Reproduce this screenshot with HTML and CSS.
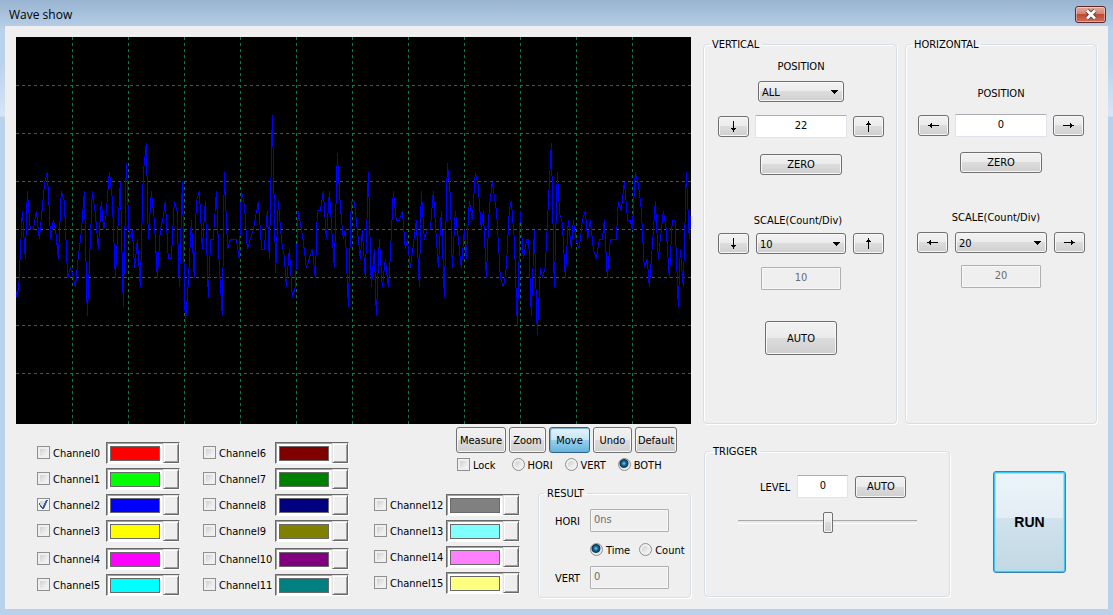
FILE: index.html
```html
<!DOCTYPE html>
<html lang="en">
<head>
<meta charset="utf-8">
<title>Wave show</title>
<link rel="stylesheet" href="styles.css">
</head>
<body>
<div class="window">
  <header class="titlebar">
    <h1 class="title">Wave show</h1>
    <button class="close" aria-label="Close">
      <svg width="14" height="11" viewBox="0 0 14 11"><path d="M3 1.5 11 9.5M11 1.5 3 9.5" stroke="#5a3a3a" stroke-width="4.6"/><path d="M3 1.5 11 9.5M11 1.5 3 9.5" stroke="#fff" stroke-width="2.8"/></svg>
    </button>
  </header>
  <main class="client">
    <section class="top">
      <div class="scope">
        <svg class="wave" viewBox="0 0 675 387" preserveAspectRatio="none" role="img" aria-label="Waveform">
          <path class="grid-line" d="M56.5 0V387M112.5 0V387M168.5 0V387M224.5 0V387M280.5 0V387M336.5 0V387M392.5 0V387M448.5 0V387M504.5 0V387M560.5 0V387M616.5 0V387"/>
          <path class="grid-line" d="M0 48.5H675M0 96.5H675M0 144.5H675M0 192.5H675M0 240.5H675M0 288.5H675M0 336.5H675"/>
          <g class="trace" transform="translate(0 192.8) scale(.33333 9.6)">
            <polyline transform="translate(-18 0)" points="18,6.3 19,7 26,6.1 37,-2 46,3 52,-4 61,0 70,0 79,-2 88,1 104,-5 112,-6 122,1 130,-1 137,0 145,3 154,-4 163,-3 173,5 181,4 187,4.5 196,6 205,2.8 214,.2 223,-4 232,9 247,-4 256,-1.7 265,2 274,-3 281,0 289,-1.8 298,-6 307,-3.2 316,5 331,-5 340,8 349,-7 358,1 367,0 374,4 382,1 391,6 400,-6 409,-9 415,1 424,-4 433,-1 442,5 451,0 459,-1.2 466,-3 475,3 484,3 493,-3 501,-2 508,6 517,-5 526,10 535,5.5 544,-1 553,5 559,-3 568,-4 577,2 586,-3 595,7 602,1 610,1 619,-4 628,4 637,9 643,-6 653,2 661,1 679,1 688,3 694,-4"/>
            <polyline transform="translate(642 0)" points="34,-4 43,-2.7 52,2 70,0 85,-3 95,2 103,2 112,-2 118,3 127,-12 137,4.5 145,-3 155,1.3 163,2.8 169,6 178,2 187,7 196,6 205,-2 220,1.2 229,4 247,2 256,5 262,-2 271,-2 280,-4 289,1 298,-4 313,4 322,-8 331,-2.5 340,1 346,0 355,8 364,-3 373,-3 391,3 397,0 406,5 415,-6 424,6 433,2 439,9 448,1 457,6 466,3 475,6 481,2.7 490,-4 499,-1 508,-1 517,-2 526,2 532,1 541,4 550,1.6 559,-1 568,6 574,-4 583,1 592,0 601,0 610,-4 625,4 634,-2 643,7 652,-7 661,-3.6 667,4 676,-2 694,4 703,0 709,3 718,-3"/>
            <polyline transform="translate(1332 0)" points="28,-3 37,-1 46,-6 54,-4.8 64,0 70,-2 79,5 88,-2.4 97,-5 110,-1.8 121,5 130,6 139,4 148,-2.1 154,-3 163,1 172,10 181,-2 190,3 200,1 206,1 214,9 223,0 232,11 241,4 248,5 256,3.8 265,-2.8 274,-9 283,6 292,-6 299,-1.7 307,-.7 316,5 325,-1 334,2 340,-1 349,1.2 358,2 367,-1 376,-2 383,1 391,-1 400,2 409,3 418,1 427,1 433,-1 442,5 451,1 469,1 475,-3 484,-2 493,-5 503,-1 511,-1 517,0 526,-6 535,-4.8 544,-2.1 553,4 562,3 568,6 577,1.7 586,-3 595,3 610,-2 619,0 628,5 637,-1 645,-1 655,8 661,2 670,6 679,-6 688,1 692,-1.4"/>
          </g>
        </svg>
      </div>
      <fieldset class="group vertical">
        <legend>VERTICAL</legend>
        <div class="stack v-stack">
          <label class="caption" for="v-chan">POSITION</label>
          <select id="v-chan" class="select narrow"><option>ALL</option></select>
          <div class="row v-pos">
            <button class="btn arrow" aria-label="Position down"><svg width="5" height="11" viewBox="0 0 5 11"><path d="M2 0h1v7h2v1h-1v1h-1v2h-1v-2h-1v-1h-1v-1h2z"/></svg></button>
            <input class="field wide" value="22" aria-label="Vertical position">
            <button class="btn arrow" aria-label="Position up"><svg width="5" height="11" viewBox="0 0 5 11"><path d="M2 11h1v-7h2v-1h-1v-1h-1v-2h-1v2h-1v1h-1v1h2z"/></svg></button>
          </div>
          <button class="btn zero v-zero">ZERO</button>
          <label class="caption v-scale" for="v-scale">SCALE(Count/Div)</label>
          <div class="row v-scale-row">
            <button class="btn arrow" aria-label="Scale down"><svg width="5" height="11" viewBox="0 0 5 11"><path d="M2 0h1v7h2v1h-1v1h-1v2h-1v-2h-1v-1h-1v-1h2z"/></svg></button>
            <select id="v-scale" class="select"><option>10</option></select>
            <button class="btn arrow" aria-label="Scale up"><svg width="5" height="11" viewBox="0 0 5 11"><path d="M2 11h1v-7h2v-1h-1v-1h-1v-2h-1v2h-1v1h-1v1h2z"/></svg></button>
          </div>
          <input class="field readout" value="10" disabled aria-label="Vertical scale value">
          <button class="btn auto">AUTO</button>
        </div>
      </fieldset>
      <fieldset class="group horizontal">
        <legend>HORIZONTAL</legend>
        <div class="stack">
          <label class="caption h-caption" for="h-pos">POSITION</label>
          <div class="row h-pos">
            <button class="btn arrow" aria-label="Position left"><svg width="11" height="5" viewBox="0 0 11 5"><path d="M11 2v1h-7v2h-1v-1h-1v-1h-2v-1h2v-1h1v-1h1v2z"/></svg></button>
            <input id="h-pos" class="field wide" value="0">
            <button class="btn arrow" aria-label="Position right"><svg width="11" height="5" viewBox="0 0 11 5"><path d="M0 2v1h7v2h1v-1h1v-1h2v-1h-2v-1h-1v-1h-1v2z"/></svg></button>
          </div>
          <button class="btn zero h-zero">ZERO</button>
          <label class="caption h-scale" for="h-scale">SCALE(Count/Div)</label>
          <div class="row h-scale-row">
            <button class="btn arrow" aria-label="Scale left"><svg width="11" height="5" viewBox="0 0 11 5"><path d="M11 2v1h-7v2h-1v-1h-1v-1h-2v-1h2v-1h1v-1h1v2z"/></svg></button>
            <select id="h-scale" class="select h-select"><option>20</option></select>
            <button class="btn arrow" aria-label="Scale right"><svg width="11" height="5" viewBox="0 0 11 5"><path d="M0 2v1h7v2h1v-1h1v-1h2v-1h-2v-1h-1v-1h-1v2z"/></svg></button>
          </div>
          <input class="field readout" value="20" disabled aria-label="Horizontal scale value">
        </div>
      </fieldset>
    </section>

    <section class="bottom">
      <div class="channels">
        <div class="channel-col first">
          <div class="channel"><label><input type="checkbox" class="check">Channel0</label><button class="swatch" aria-label="Channel0 colour"><span class="chip red"></span><span class="drop"></span></button></div>
          <div class="channel"><label><input type="checkbox" class="check">Channel1</label><button class="swatch" aria-label="Channel1 colour"><span class="chip lime"></span><span class="drop"></span></button></div>
          <div class="channel"><label><input type="checkbox" class="check" checked>Channel2</label><button class="swatch" aria-label="Channel2 colour"><span class="chip blue"></span><span class="drop"></span></button></div>
          <div class="channel"><label><input type="checkbox" class="check">Channel3</label><button class="swatch" aria-label="Channel3 colour"><span class="chip yellow"></span><span class="drop"></span></button></div>
          <div class="channel spaced"><label><input type="checkbox" class="check">Channel4</label><button class="swatch" aria-label="Channel4 colour"><span class="chip magenta"></span><span class="drop"></span></button></div>
          <div class="channel"><label><input type="checkbox" class="check">Channel5</label><button class="swatch" aria-label="Channel5 colour"><span class="chip cyan"></span><span class="drop"></span></button></div>
        </div>
        <div class="channel-col">
          <div class="channel"><label><input type="checkbox" class="check">Channel6</label><button class="swatch" aria-label="Channel6 colour"><span class="chip maroon"></span><span class="drop"></span></button></div>
          <div class="channel"><label><input type="checkbox" class="check">Channel7</label><button class="swatch" aria-label="Channel7 colour"><span class="chip green"></span><span class="drop"></span></button></div>
          <div class="channel"><label><input type="checkbox" class="check">Channel8</label><button class="swatch" aria-label="Channel8 colour"><span class="chip navy"></span><span class="drop"></span></button></div>
          <div class="channel"><label><input type="checkbox" class="check">Channel9</label><button class="swatch" aria-label="Channel9 colour"><span class="chip olive"></span><span class="drop"></span></button></div>
          <div class="channel spaced"><label><input type="checkbox" class="check">Channel10</label><button class="swatch" aria-label="Channel10 colour"><span class="chip purple"></span><span class="drop"></span></button></div>
          <div class="channel"><label><input type="checkbox" class="check">Channel11</label><button class="swatch" aria-label="Channel11 colour"><span class="chip teal"></span><span class="drop"></span></button></div>
        </div>
      </div>

      <div class="tools">
        <div class="toolbar">
          <button class="btn tool">Measure</button>
          <button class="btn tool">Zoom</button>
          <button class="btn tool active">Move</button>
          <button class="btn tool">Undo</button>
          <button class="btn tool">Default</button>
        </div>
        <div class="modes">
          <label class="lock"><input type="checkbox" class="check">Lock</label>
          <label><input type="radio" name="axis" class="radio">HORI</label>
          <label><input type="radio" name="axis" class="radio">VERT</label>
          <label><input type="radio" name="axis" class="radio" checked>BOTH</label>
        </div>
        <div class="lower">
          <div class="channel-col last">
            <div class="channel"><label><input type="checkbox" class="check">Channel12</label><button class="swatch" aria-label="Channel12 colour"><span class="chip gray"></span><span class="drop"></span></button></div>
            <div class="channel"><label><input type="checkbox" class="check">Channel13</label><button class="swatch" aria-label="Channel13 colour"><span class="chip aqua"></span><span class="drop"></span></button></div>
            <div class="channel"><label><input type="checkbox" class="check">Channel14</label><button class="swatch" aria-label="Channel14 colour"><span class="chip pink"></span><span class="drop"></span></button></div>
            <div class="channel"><label><input type="checkbox" class="check">Channel15</label><button class="swatch" aria-label="Channel15 colour"><span class="chip cream"></span><span class="drop"></span></button></div>
          </div>
          <fieldset class="group result">
            <legend>RESULT</legend>
            <div class="result-grid">
              <label for="r-hori">HORI</label>
              <input id="r-hori" class="field left" value="0ns" disabled>
              <div class="units">
                <label><input type="radio" name="unit" class="radio" checked>Time</label>
                <label><input type="radio" name="unit" class="radio">Count</label>
              </div>
              <label for="r-vert">VERT</label>
              <input id="r-vert" class="field left" value="0" disabled>
            </div>
          </fieldset>
        </div>
      </div>

      <div class="side">
        <fieldset class="group trigger">
          <legend>TRIGGER</legend>
          <div class="level-row">
            <label for="level">LEVEL</label>
            <input id="level" class="field level" value="0">
            <button class="btn level-auto">AUTO</button>
          </div>
          <input type="range" class="slider" min="0" max="100" value="50" aria-label="Trigger level">
        </fieldset>
        <button class="run">RUN</button>
      </div>
    </section>
  </main>
</div>
</body>
</html>
```
FILE: styles.css
```css
* {
  box-sizing: border-box;
}

body {
  margin: 0;
  font: 11px/14px "DejaVu Sans Condensed", "Noto Sans", sans-serif;
  color: #000;
}

button,
input,
select {
  margin: 0;
  font: inherit;
  color: inherit;
}

.window {
  display: flex;
  flex-direction: column;
  min-height: 100vh;
  padding: 0 5px 6px;
  background: linear-gradient(#99b4d1 0, #b9d1ea 30px, #b9d1ea 60px, #d7e5f5 116px, #b9d1ea 117px);
}

.titlebar {
  display: flex;
  justify-content: space-between;
  align-items: center;
  height: 26px;
  padding: 3px 2px 0 4px;
}

.title {
  margin: 0;
  font: 12px/18px "Open Sans", "Noto Sans", sans-serif;
}

.close {
  display: flex;
  align-items: center;
  justify-content: center;
  width: 31px;
  height: 17px;
  padding: 0;
  border: 1px solid #5c2a2a;
  border-radius: 3px;
  background: linear-gradient(#e2a99b 0, #d0826f 48%, #bd4a30 50%, #cf7059 100%);
  box-shadow: inset 0 0 0 1px rgba(255, 255, 255, .4);
}

.close svg {
  fill: none;
}

.client {
  flex: 1;
  display: flex;
  flex-direction: column;
  padding: 11px;
  background: #efefef;
}

.top {
  flex: 1;
  display: grid;
  grid-template-columns: 1fr 194px 192px;
  column-gap: 8px;
  min-height: 387px;
}

.scope {
  display: flex;
  margin-right: 4px;
  background: #000;
}

.wave {
  display: block;
  flex: 1;
  width: 100%;
  height: 100%;
}

.grid-line {
  fill: none;
  stroke: #008040;
  stroke-dasharray: 3 3;
  shape-rendering: crispEdges;
}

.trace polyline {
  fill: none;
  stroke: #00f;
  vector-effect: non-scaling-stroke;
  shape-rendering: crispEdges;
}

.group {
  min-width: 0;
  margin: 0;
  padding: 0;
  border: 1px solid #d5dfe8;
  border-radius: 4px;
  box-shadow: 1px 1px 0 #fff, inset 1px 1px 0 #fff;
}

.group legend {
  height: 14px;
  margin-left: 5px;
  padding: 0 3px;
  line-height: 16px;
}

.stack {
  display: flex;
  flex-direction: column;
  align-items: center;
}

.v-stack {
  padding-left: 2px;
}

.row {
  display: flex;
  align-items: center;
  gap: 7px;
}

label {
  display: flex;
  align-items: center;
  padding-top: 2px;
}

.caption {
  align-items: flex-start;
  height: 14px;
  margin-top: 8px;
  padding-top: 0;
  line-height: 16px;
}

.btn {
  display: flex;
  align-items: center;
  justify-content: center;
  height: 21px;
  padding: 1px 0 0;
  border: 1px solid #707070;
  border-radius: 3px;
  background: linear-gradient(#f2f2f2 0, #ebebeb 49%, #dcdcdc 50%, #cfcfcf 100%);
  box-shadow: inset 0 0 0 1px #f7f7f7;
}

.arrow {
  width: 31px;
  padding: 0;
}

.select {
  appearance: none;
  width: 90px;
  height: 21px;
  padding: 2px 3px 0;
  border: 1px solid #707070;
  border-radius: 3px;
  background:
    linear-gradient(#000, #000) right 5px top 8px / 7px 1px no-repeat,
    linear-gradient(#000, #000) right 6px top 9px / 5px 1px no-repeat,
    linear-gradient(#000, #000) right 7px top 10px / 3px 1px no-repeat,
    linear-gradient(#000, #000) right 8px top 11px / 1px 1px no-repeat,
    linear-gradient(#f2f2f2 0, #ebebeb 49%, #dcdcdc 50%, #cfcfcf 100%);
  box-shadow: inset 0 0 0 1px #f7f7f7;
}

.narrow {
  width: 86px;
  margin-top: 8px;
}

.h-select {
  width: 92px;
}

.field {
  height: 23px;
  padding: 0 3px 2px;
  border: 1px solid #e2e3ea;
  border-top-color: #abadb3;
  border-radius: 1px;
  background: #fff;
  text-align: center;
}

.field:disabled {
  border-color: #afafaf;
  background: #efefef;
  box-shadow: inset 0 0 0 1px #f7f7f7;
  color: #6d6d6d;
}

.wide {
  width: 92px;
}

.zero {
  width: 82px;
}

.readout {
  width: 80px;
  margin-top: 12px;
}

.v-pos {
  gap: 6px;
  margin-top: 13px;
}

.v-zero {
  margin-top: 16px;
}

.v-scale {
  margin-top: 38px;
  padding-right: 6px;
}

.v-scale-row {
  margin-top: 6px;
}

.v-stack .readout {
  margin-top: 13px;
}

.auto {
  width: 72px;
  height: 34px;
  margin-top: 31px;
}

.h-caption {
  margin-top: 35px;
}

.h-pos {
  gap: 6px;
  margin-top: 14px;
}

.h-zero {
  margin-top: 15px;
}

.h-scale {
  margin-top: 37px;
  padding-right: 10px;
}

.h-scale-row {
  margin-top: 8px;
}

.bottom {
  display: grid;
  grid-template-columns: 337px 1fr 394px;
}

.channels {
  display: grid;
  grid-template-columns: 143px 146px;
  column-gap: 23px;
  padding: 18px 0 0 21px;
}

.channel-col {
  display: flex;
  flex-direction: column;
  gap: 4px;
}

.channel {
  display: flex;
  justify-content: space-between;
}

.spaced {
  margin-top: 2px;
}

.check,
.radio {
  appearance: none;
  flex: none;
  width: 13px;
  height: 13px;
  margin: 0 3px 3px 0;
  border: 1px solid #8e8f8f;
  background: linear-gradient(135deg, #cdd1d6, #f6f6f6) content-box #f4f4f4;
  padding: 2px;
}

.radio {
  border-radius: 50%;
}

.check:checked {
  background:
    linear-gradient(52deg, transparent 34%, #3a5a9c 36% 50%, transparent 52%) 1px 4px / 5px 6px no-repeat,
    linear-gradient(115deg, transparent 42%, #3a5a9c 44% 62%, transparent 64%) 3px 1px / 7px 9px no-repeat,
    linear-gradient(135deg, #cdd1d6, #f6f6f6) content-box,
    #f4f4f4;
}

.radio:checked {
  background: radial-gradient(circle at 45% 40%, #6fd0f5 0, #1b6f9e 2px, #0a3350 4px, #e8e8e8 5px);
}

.swatch {
  display: flex;
  justify-content: space-between;
  width: 74px;
  height: 22px;
  padding: 0 0 0 3px;
  border: 1px solid;
  border-color: #696969 #fff #fff #696969;
  background: #efefef;
  box-shadow: inset 1px 1px 0 #a0a0a0;
}

.chip {
  width: 50px;
  height: 15px;
  margin-top: 3px;
  border: 1px solid #696969;
  box-shadow: 0 0 0 2px #fff;
}

.drop {
  width: 16px;
  height: 20px;
  border: 1px solid;
  border-color: #e3e3e3 #696969 #696969 #e3e3e3;
  box-shadow: inset 1px 1px 0 #fff, inset -1px -1px 0 #a0a0a0;
}

.red { background: #f00; }
.lime { background: #0f0; }
.blue { background: #00f; }
.yellow { background: #ff0; }
.magenta { background: #f0f; }
.cyan { background: #0ff; }
.maroon { background: #800000; }
.green { background: #008000; }
.navy { background: #000080; }
.olive { background: #808000; }
.purple { background: #800080; }
.teal { background: #008080; }
.gray { background: #808080; }
.aqua { background: #80ffff; }
.pink { background: #ff80ff; }
.cream { background: #ffff80; }

.tools {
  display: flex;
  flex-direction: column;
  padding: 3px 0 0 21px;
}

.toolbar {
  display: grid;
  grid-template-columns: 50px 37px 41px 39px 42px;
  gap: 3px;
  padding-left: 82px;
}

.tool {
  height: 26px;
}

.active {
  border-color: #2c628b;
  background: linear-gradient(#e5f4fc 0, #c4e5f6 49%, #98d1ef 50%, #68b3db 100%);
  box-shadow: inset 1px 1px 1px #7faac4;
}

.modes {
  display: flex;
  gap: 12px;
  height: 20px;
  padding: 4px 0 0 83px;
}

.lock {
  margin-right: 4px;
}

.lower {
  display: flex;
  gap: 18px;
  padding-top: 13px;
}

.last {
  width: 146px;
  padding-top: 8px;
}

.result {
  width: 153px;
}

.result-grid {
  display: grid;
  grid-template-columns: 35px 79px;
  align-items: center;
  padding: 9px 0 8px 16px;
}

.left {
  width: 100%;
  text-align: left;
}

.units {
  grid-column: 2;
  display: flex;
  gap: 9px;
  height: 34px;
  padding-top: 1px;
  white-space: nowrap;
}

.side {
  display: flex;
  align-items: flex-start;
  padding: 20px 0 0 1px;
}

.trigger {
  width: 246px;
  height: 153px;
}

.level-row {
  display: flex;
  align-items: center;
  gap: 7px;
  padding: 17px 0 0 55px;
}

.level {
  width: 51px;
}

.level-auto {
  width: 51px;
  height: 22px;
}

.slider {
  appearance: none;
  display: block;
  width: 179px;
  height: 22px;
  margin: 13px 0 0 33px;
  background: linear-gradient(#a8a8a8 0 1px, #e7eaea 1px 3px, #fff 3px) center / 100% 4px no-repeat;
}

.slider::-webkit-slider-thumb {
  appearance: none;
  width: 10px;
  height: 21px;
  border: 1px solid #707070;
  border-radius: 2px;
  background: linear-gradient(#f2f2f2 0, #ebebeb 49%, #dcdcdc 50%, #cfcfcf 100%);
  box-shadow: inset 0 0 0 1px #f7f7f7;
}

.run {
  width: 73px;
  height: 102px;
  margin: 27px 0 0 43px;
  padding: 0;
  border: 1px solid #3c7fb1;
  border-radius: 3px;
  background: linear-gradient(#eaf4f8 0, #e4edf5 46%, #d0e2ed 46%, #c1d9e4 100%);
  box-shadow: inset 0 0 0 1px #3fc8f5, inset 0 0 0 2px #9fe3f9;
  font: bold 14px/16px "Liberation Sans", Arial, sans-serif;
}
```
